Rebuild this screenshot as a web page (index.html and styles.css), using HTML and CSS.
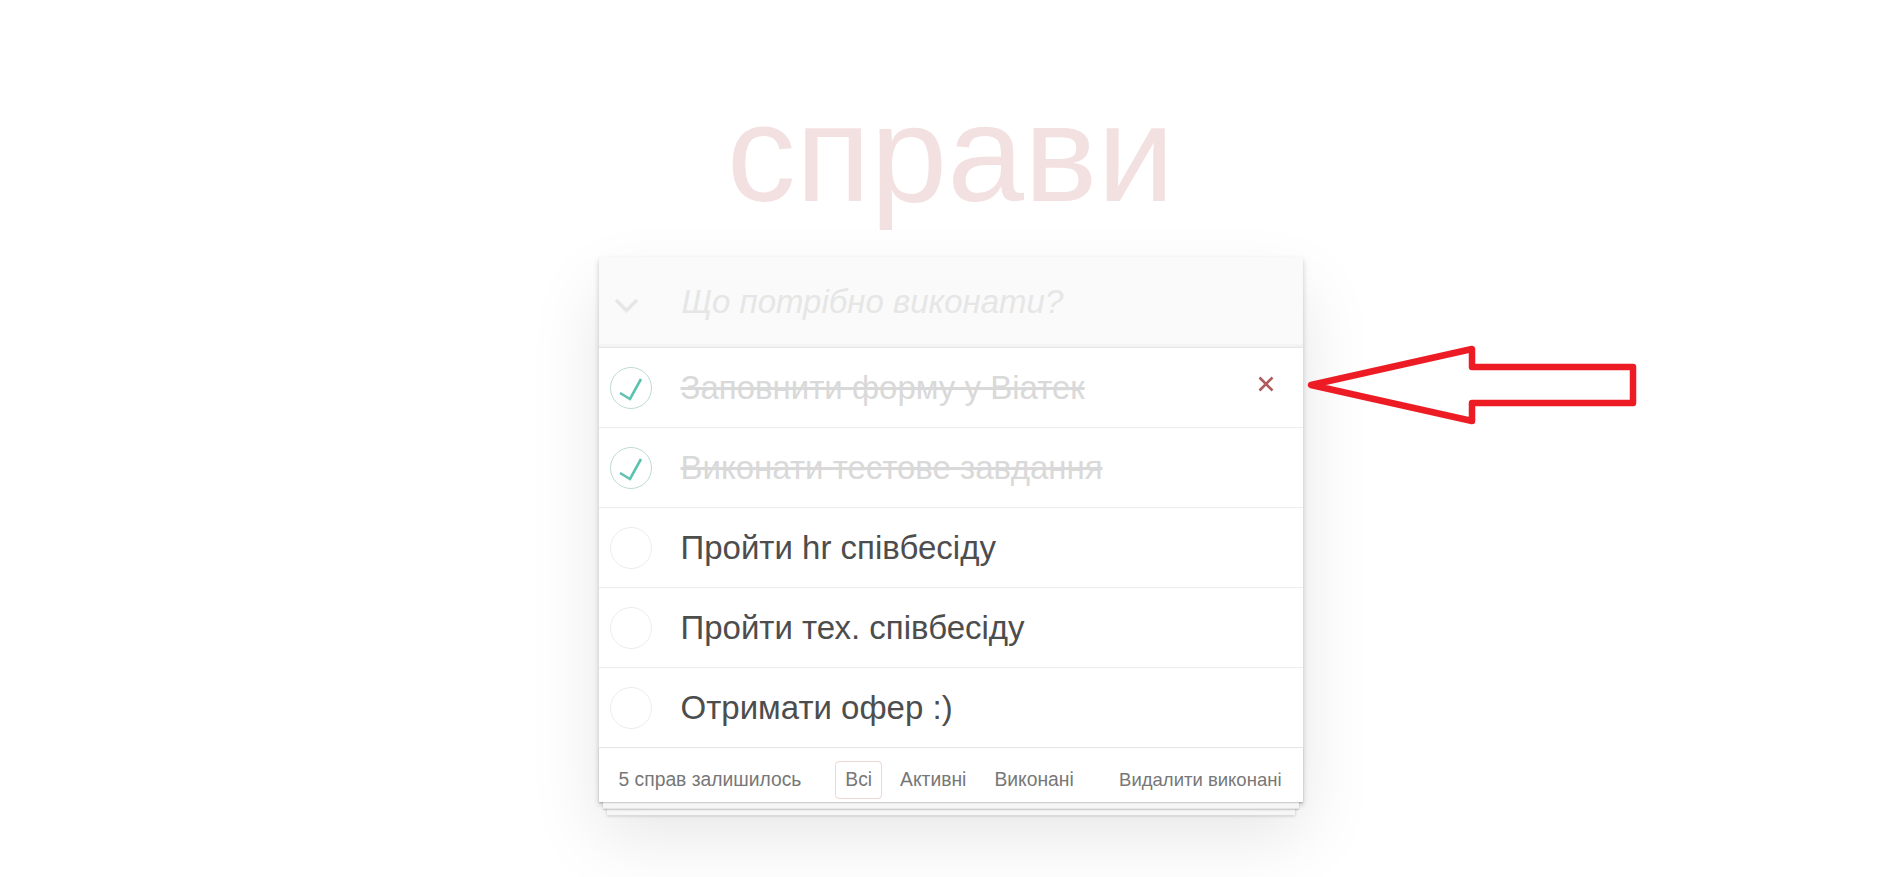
FILE: index.html
```html
<!DOCTYPE html>
<html lang="uk">
<head>
<meta charset="utf-8">
<title>справи</title>
<link rel="stylesheet" href="styles.css">
</head>
<body>
<div class="page">
  <section class="todoapp">
    <h1 class="title">справи</h1>
    <div class="card">
      <header class="new-row">
        <span class="toggle-all">
          <svg width="25" height="15" viewBox="0 0 25 15"><polyline points="2,2 12.5,12.5 23,2" fill="none" stroke="#e6e6e6" stroke-width="3.5"/></svg>
        </span>
        <input class="new-todo" type="text" placeholder="Що потрібно виконати?">
      </header>
      <ul class="list">
        <li class="item done">
          <span class="check">
            <svg width="42" height="42" viewBox="0 0 42 42"><circle cx="21" cy="21" r="20.5" fill="none" stroke="#bddad5" stroke-width="1"/><polyline points="10,26 20,32 31,12" fill="none" stroke="#5dc2af" stroke-width="2.6"/></svg>
          </span>
          <label class="text">Заповнити форму у Віатек</label>
          <button class="destroy" type="button" aria-label="delete">
            <svg width="16" height="16" viewBox="0 0 16 16"><path d="M1.5 1.5 L14.5 14.5 M14.5 1.5 L1.5 14.5" stroke="#af5b5e" stroke-width="2.6" fill="none"/></svg>
          </button>
        </li>
        <li class="item done">
          <span class="check">
            <svg width="42" height="42" viewBox="0 0 42 42"><circle cx="21" cy="21" r="20.5" fill="none" stroke="#bddad5" stroke-width="1"/><polyline points="10,26 20,32 31,12" fill="none" stroke="#5dc2af" stroke-width="2.6"/></svg>
          </span>
          <label class="text">Виконати тестове завдання</label>
        </li>
        <li class="item">
          <span class="check">
            <svg width="42" height="42" viewBox="0 0 42 42"><circle cx="21" cy="21" r="20.5" fill="none" stroke="#ededed" stroke-width="1"/></svg>
          </span>
          <label class="text">Пройти hr співбесіду</label>
        </li>
        <li class="item">
          <span class="check">
            <svg width="42" height="42" viewBox="0 0 42 42"><circle cx="21" cy="21" r="20.5" fill="none" stroke="#ededed" stroke-width="1"/></svg>
          </span>
          <label class="text">Пройти тех. співбесіду</label>
        </li>
        <li class="item">
          <span class="check">
            <svg width="42" height="42" viewBox="0 0 42 42"><circle cx="21" cy="21" r="20.5" fill="none" stroke="#ededed" stroke-width="1"/></svg>
          </span>
          <label class="text">Отримати офер :)</label>
        </li>
      </ul>
      <footer class="footer">
        <span class="count">5 справ залишилось</span>
        <ul class="filters">
          <li><a class="filter selected">Всі</a></li>
          <li><a class="filter">Активні</a></li>
          <li><a class="filter">Виконані</a></li>
        </ul>
        <button class="clear" type="button">Видалити виконані</button>
      </footer>
    </div>
  </section>
  <svg class="arrow" width="345" height="92" viewBox="0 0 345 92">
    <polygon points="11,45 172,9 172,27 333,27 333,63 172,63 172,81" fill="none" stroke="#ed1c24" stroke-width="6.5" stroke-linejoin="round"/>
  </svg>
</div>
</body>
</html>
```

FILE: styles.css
```css
html {
  background: #ffffff;
}

body {
  margin: 0;
  padding: 0;
  font-family: "Liberation Sans", Arial, Helvetica, sans-serif;
  color: #4d4d4d;
}

.page {
  position: relative;
  min-height: 877px;
  padding-top: 84px;
  box-sizing: border-box;
}

.todoapp {
  width: 704px;
  margin: 0 auto;
}

.title {
  margin: 0 0 34px;
  font-size: 138px;
  line-height: 139px;
  font-weight: 400;
  text-align: center;
  color: rgba(175, 47, 47, 0.15);
}

.card {
  position: relative;
  z-index: 0;
  background: #fff;
  box-shadow: 0 2.7px 5.3px 0 rgba(0, 0, 0, 0.2), 0 33px 67px 0 rgba(0, 0, 0, 0.1);
}

.new-row {
  display: flex;
  align-items: center;
  height: 90px;
  background: #fafafa;
  box-shadow: inset 0 -2.7px 1.3px rgba(0, 0, 0, 0.03);
}

.toggle-all {
  flex: 0 0 80px;
  display: flex;
  padding-left: 15px;
  padding-top: 7px;
  box-sizing: border-box;
}

.new-todo {
  flex: 1;
  height: 90px;
  border: 0;
  outline: none;
  padding: 0 20px 0 3px;
  margin: 0;
  background: transparent;
  font-family: inherit;
  font-size: 33px;
  color: #4d4d4d;
}

.new-todo::placeholder {
  font-style: italic;
  color: #e6e6e6;
}

.list {
  list-style: none;
  margin: 0;
  padding: 0;
  border-top: 1px solid #e6e6e6;
}

.item {
  position: relative;
  display: flex;
  align-items: center;
  border-bottom: 1px solid #ededed;
}

.item:last-child {
  border-bottom: 0;
}

.check {
  display: flex;
  margin-left: 11px;
  width: 42px;
  height: 42px;
}

.text {
  padding: 20px 0 20px 29px;
  font-size: 33px;
  line-height: 39px;
  color: #4d4d4d;
}

.done .text {
  color: #d9d9d9;
  text-decoration: line-through;
}

.destroy {
  position: absolute;
  right: 29px;
  top: 28px;
  width: 16px;
  height: 16px;
  padding: 0;
  margin: 0;
  border: 0;
  background: none;
  display: flex;
}

.footer {
  position: relative;
  display: grid;
  grid-template-columns: 1fr auto 1fr;
  align-items: center;
  height: 28px;
  padding: 13px 21px 13px 20px;
  border-top: 1px solid #e6e6e6;
  font-size: 19.3px;
  line-height: 28px;
  color: #777;
}

.footer::before {
  content: "";
  position: absolute;
  left: 0;
  right: 0;
  bottom: 0;
  height: 55px;
  z-index: -1;
  box-shadow: 0 1.3px 1.3px rgba(0, 0, 0, 0.2),
              0 10.7px 0 -4px #f6f6f6,
              0 12px 1.3px -4px rgba(0, 0, 0, 0.2),
              0 21.3px 0 -8px #f6f6f6,
              0 22.7px 2.7px -8px rgba(0, 0, 0, 0.2);
}

.count {
  justify-self: start;
}

.filters {
  display: flex;
  list-style: none;
  margin: 0;
  padding: 0 0 0 19px;
}

.filter {
  display: block;
  height: 38px;
  box-sizing: border-box;
  line-height: 36px;
  padding: 0 9px;
  margin: 0 4px;
  border: 1px solid transparent;
  border-radius: 4px;
  color: #777;
}

.filter.selected {
  border-color: rgba(175, 47, 47, 0.2);
}

.clear {
  justify-self: end;
  padding: 0;
  margin: 0;
  border: 0;
  background: none;
  font-family: inherit;
  font-size: 18.5px;
  line-height: 28px;
  color: #777;
}

.arrow {
  position: absolute;
  left: 1300px;
  top: 340px;
}
```
